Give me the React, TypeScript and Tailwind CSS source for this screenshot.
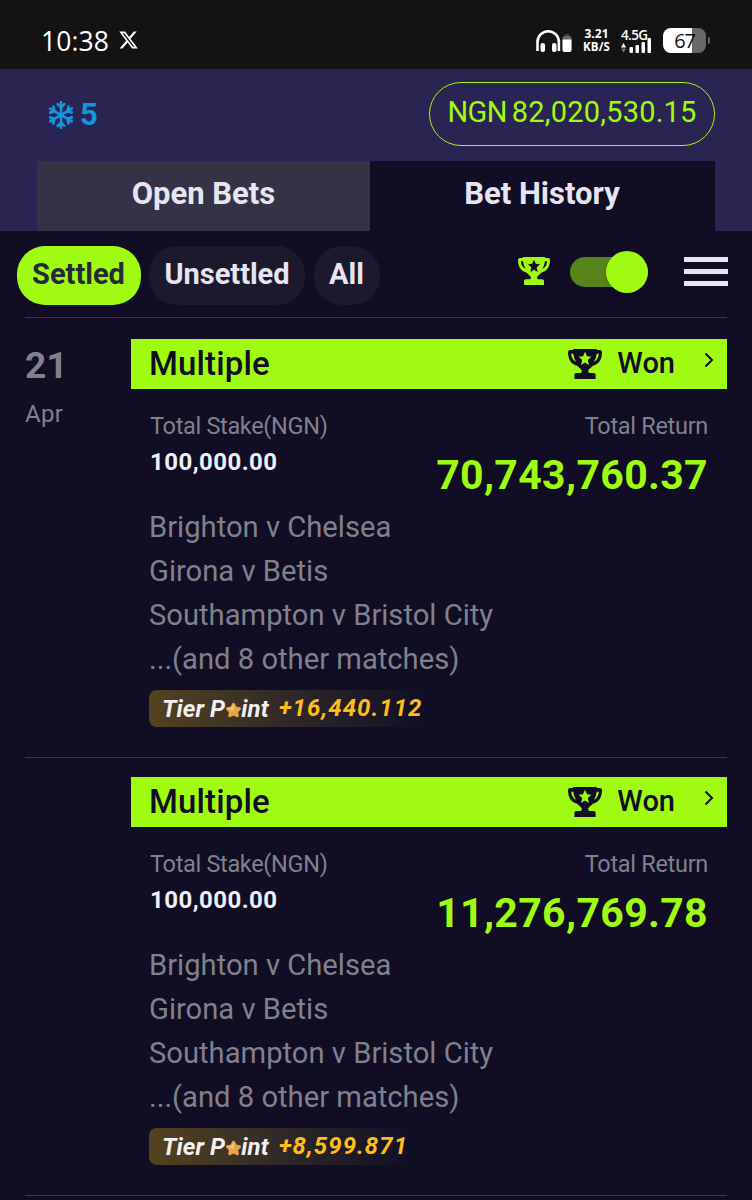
import React from 'react';
import { FaRegSnowflake } from 'react-icons/fa';

interface Bet {
  day?: string;
  month?: string;
  stake: string;
  totalReturn: string;
  tierPoint: string;
  matches: string[];
}

const matches = [
  'Brighton v Chelsea',
  'Girona v Betis',
  'Southampton v Bristol City',
  '...(and 8 other matches)',
];

const bets: Bet[] = [
  { day: '21', month: 'Apr', stake: '100,000.00', totalReturn: '70,743,760.37', tierPoint: '+16,440.112', matches },
  { stake: '100,000.00', totalReturn: '11,276,769.78', tierPoint: '+8,599.871', matches },
];

const Trophy: React.FC<{ className: string }> = ({ className }) => (
  <svg viewBox="0 0 96 84" preserveAspectRatio="none" fill="currentColor" className={className}>
    <path
      fillRule="evenodd"
      d="M18 0H78Q82 0 83 3H90Q96 3 96 9C96 33 84 43 70 47C64 53 60 56 57 60Q57 67 61 67H72Q78 67 78 72V84H18V72Q18 67 24 67H35Q39 67 39 60C36 56 32 53 26 47C12 43 0 33 0 9Q0 3 6 3H13Q14 0 18 0ZM9 13Q9 28 23 36Q16 26 15 13ZM87 13Q87 28 73 36Q80 26 81 13ZM48 8L53.5 20L66 22L56 31L59 45L48 38L37 45L40 31L30 22L42.5 20Z"
    />
  </svg>
);

const StatusBar = () => (
  <div className="flex h-[69px] items-center bg-[#131313] pl-[41px] pr-[42px] pt-[12px] text-white">
    <span className="pt-px font-['Open_Sans',sans-serif] text-[26.5px] font-medium leading-none tracking-[0.1px]">10:38</span>
    <svg viewBox="1 2 22 20" fill="currentColor" className="mb-px ml-[10px] h-[18px] w-[19px]">
      <path d="M18.244 2.25h3.308l-7.227 8.26 8.502 11.24H16.17l-5.214-6.817L4.99 21.75H1.68l7.73-8.835L1.254 2.25H8.08l4.713 6.231zm-1.161 17.52h1.833L7.084 4.126H5.117z" />
    </svg>

    <svg viewBox="0 0 36 24" className="ml-auto h-6 w-9" fill="none">
      <path d="M1.5 22V13a10.7 10.7 0 0 1 21.4 0v9" stroke="white" strokeWidth="2.6" />
      <rect x="4.5" y="14" width="4.5" height="9" rx="2" fill="white" />
      <rect x="16" y="14" width="4.5" height="9" rx="2" fill="white" />
      <rect x="26.5" y="7" width="9" height="16" rx="2" fill="#666" />
      <rect x="29" y="5" width="4" height="2" fill="#444" />
      <path d="M26.5 10.5h9V21a2 2 0 0 1-2 2h-5a2 2 0 0 1-2-2z" fill="white" />
    </svg>
    <div className="ml-[10px] flex w-[29px] flex-col items-center gap-px font-['Open_Sans',sans-serif] text-[12px] font-bold leading-[12px]">
      <span className="block h-[12px]">3.21</span>
      <span className="block h-[12px] text-[11.5px] tracking-[0.2px]">KB/S</span>
    </div>
    <div className="ml-[10px] flex w-[31px] flex-col">
      <span className="font-['Open_Sans',sans-serif] text-[13.5px] font-semibold leading-[12px] tracking-[-0.6px]">4.5G</span>
      <svg viewBox="0 0 31 15" className="-mt-[3px] h-[15px] w-[31px]" fill="white">
        <path d="M0 9.5L2.5 5L5 9.5z" />
        <path d="M0 10.5L2.5 14.5L5 10.5z" fill="#777" />
        <rect x="8.5" y="9" width="3.5" height="6" rx="1" />
        <rect x="14.5" y="7" width="3.5" height="8" rx="1" />
        <rect x="20.5" y="4" width="3.5" height="11" rx="1" />
        <rect x="26.5" y="0" width="3.5" height="15" rx="1" />
      </svg>
    </div>
    <div className="ml-[11px] flex items-center gap-[2px]">
      <div className="flex h-[25px] w-[43px] items-center justify-center rounded-[8px] bg-linear-to-r from-white from-67% to-[#686868] to-67% font-['Open_Sans',sans-serif] text-[20px] font-medium tracking-[-1.2px] text-[#131313]">
        67
      </div>
      <div className="h-[7px] w-[2px] rounded-r bg-[#686868]" />
    </div>
  </div>
);

const Header = () => (
  <header className="h-[162px] bg-[#2a2452] pt-[13px]">
    <div className="flex h-[64px] items-center justify-between pl-12 pr-[37px]">
      <div className="flex items-center gap-[6px] text-[#1496e1]">
        <FaRegSnowflake className="mt-px h-[28px] w-[26px]" />
        <span className="text-[31px] font-bold leading-none">5</span>
      </div>
      <div className="flex h-[64px] w-[286px] items-center justify-center gap-[5px] rounded-full border-[1.5px] border-[#9ffb12] pb-[2px] text-[29px] text-[#9ffb12]">
        <span className="tracking-[-0.6px]">NGN</span>
        <span className="tracking-[0.2px]">82,020,530.15</span>
      </div>
    </div>
    <div className="ml-[37px] mr-[37px] mt-[15px] flex h-[70px] text-[31px] font-bold leading-[66px] text-[#e7e6f0]">
      <div className="w-[333px] bg-[#353247] text-center">Open Bets</div>
      <div className="flex-1 bg-[#100d25] pr-px text-center">Bet History</div>
    </div>
  </header>
);

const Filters = () => (
  <div className="flex h-[86px] items-center pl-[17px] pr-6 pt-[3px] text-[29px] font-bold leading-[56px] text-[#e7e6f0]">
    <button className="h-[59px] w-[124px] rounded-[28px] bg-[#9ffb12] pb-[3px] pr-px text-[#252b35]">Settled</button>
    <button className="ml-2 h-[59px] w-[156px] rounded-[28px] bg-[#1c192f] pb-[3px]">Unsettled</button>
    <button className="ml-[9px] h-[59px] w-[66px] rounded-[28px] bg-[#1c192f] pb-[3px] pr-px">All</button>
    <Trophy className="mb-[9px] ml-auto h-7 w-8 text-[#9ffb12]" />
    <div className="mb-[7px] ml-5 flex h-[30px] w-[78px] items-center justify-end rounded-full bg-[#578519]">
      <div className="h-[42px] w-[42px] shrink-0 rounded-full bg-[#9ffb12] shadow-md" />
    </div>
    <div className="mb-[9px] ml-9 flex w-[44px] flex-col gap-[7px]">
      <div className="h-[5px] bg-[#e7e6f0]" />
      <div className="h-[5px] bg-[#e7e6f0]" />
      <div className="h-[5px] bg-[#e7e6f0]" />
    </div>
  </div>
);

const TierPoint: React.FC<{ value: string }> = ({ value }) => (
  <div className="mt-[9px] flex h-[37px] w-fit items-center rounded-lg bg-linear-to-r from-[#54431f] to-[#100d25] pl-[13px] pr-2 text-[24px] font-bold italic leading-[37px]">
    <span className="pt-px tracking-[0.1px] text-[#f3f0f2]">Tier P</span>
    <svg viewBox="0 0 24 24" className="ml-px mt-[3px] h-[16px] w-[15px]">
      <path d="M12 3l3 6 6.5 1-4.7 4.7 1.2 6.3-6-3-6 3 1.200-6.300L2.500 10 9 9z" fill="#e8a545" stroke="#e8a545" strokeWidth="5" strokeLinejoin="round" />
      <path d="M12 2L9 8.5l-7 1L12 13z" fill="#f8cb83" />
    </svg>
    <span className="pt-px tracking-[0.2px] text-[#f3f0f2]">int</span>
    <span className="ml-[10px] pb-px tracking-[1.05px] text-[#ffbd17]">{value}</span>
  </div>
);

const BetItem: React.FC<{ bet: Bet }> = ({ bet }) => (
  <article className="mx-[25px] flex h-[419px] border-b border-[#37344c]">
    <div className="w-[106px] text-[#81808d]">
      <div className="text-[37px] font-bold leading-[54px] tracking-[0.3px]">{bet.day}</div>
      <div className="text-[24px] leading-[42px] tracking-[0.3px]">{bet.month}</div>
    </div>
    <div className="flex-1">
      <div className="flex h-[50px] items-center bg-[#9ffb12] pl-[18px] pr-[13px] font-medium text-[#100d25]">
        <span className="text-[33px] tracking-[0.15px]">Multiple</span>
        <Trophy className="ml-auto h-[30px] w-[34px]" />
        <span className="ml-[15px] text-[29px]">Won</span>
        <svg viewBox="0 0 10 16" className="mb-[8px] ml-[29px] h-4 w-[10px]" fill="none" stroke="currentColor" strokeWidth="2">
          <path d="M1.5 1.5L8 8l-6.5 6.5" />
        </svg>
      </div>
      <div className="flex justify-between pl-[19px] pr-[19px] pt-[19px] leading-9">
        <div>
          <div className="text-[23.5px] tracking-[-0.32px] text-[#81808d]">Total Stake(NGN)</div>
          <div className="text-[24px] font-bold tracking-[0.45px] text-[#f0eff8]">{bet.stake}</div>
        </div>
        <div className="text-right">
          <div className="text-[23.5px] tracking-[-0.3px] text-[#81808d]">Total Return</div>
          <div className="h-[61px] text-[41px] font-bold leading-[62px] tracking-[0.35px] text-[#9ffb12]">{bet.totalReturn}</div>
        </div>
      </div>
      <div className="pl-[18px]">
        <ul className="text-[29.2px] leading-[44px] text-[#81808d]">
          {bet.matches.map((match) => (
            <li key={match}>{match}</li>
          ))}
        </ul>
        <TierPoint value={bet.tierPoint} />
      </div>
    </div>
  </article>
);

const App: React.FC = () => (
  <div className="h-[1200px] w-[752px] overflow-hidden whitespace-nowrap bg-[#100d25] font-['Roboto',sans-serif]">
    <StatusBar />
    <Header />
    <Filters />
    <div className="mx-[25px] mb-[21px] h-px bg-[#37344c]" />
    <div className="flex flex-col gap-[19px]">
      {bets.map((bet) => (
        <BetItem key={bet.totalReturn} bet={bet} />
      ))}
    </div>
  </div>
);

export default App;
